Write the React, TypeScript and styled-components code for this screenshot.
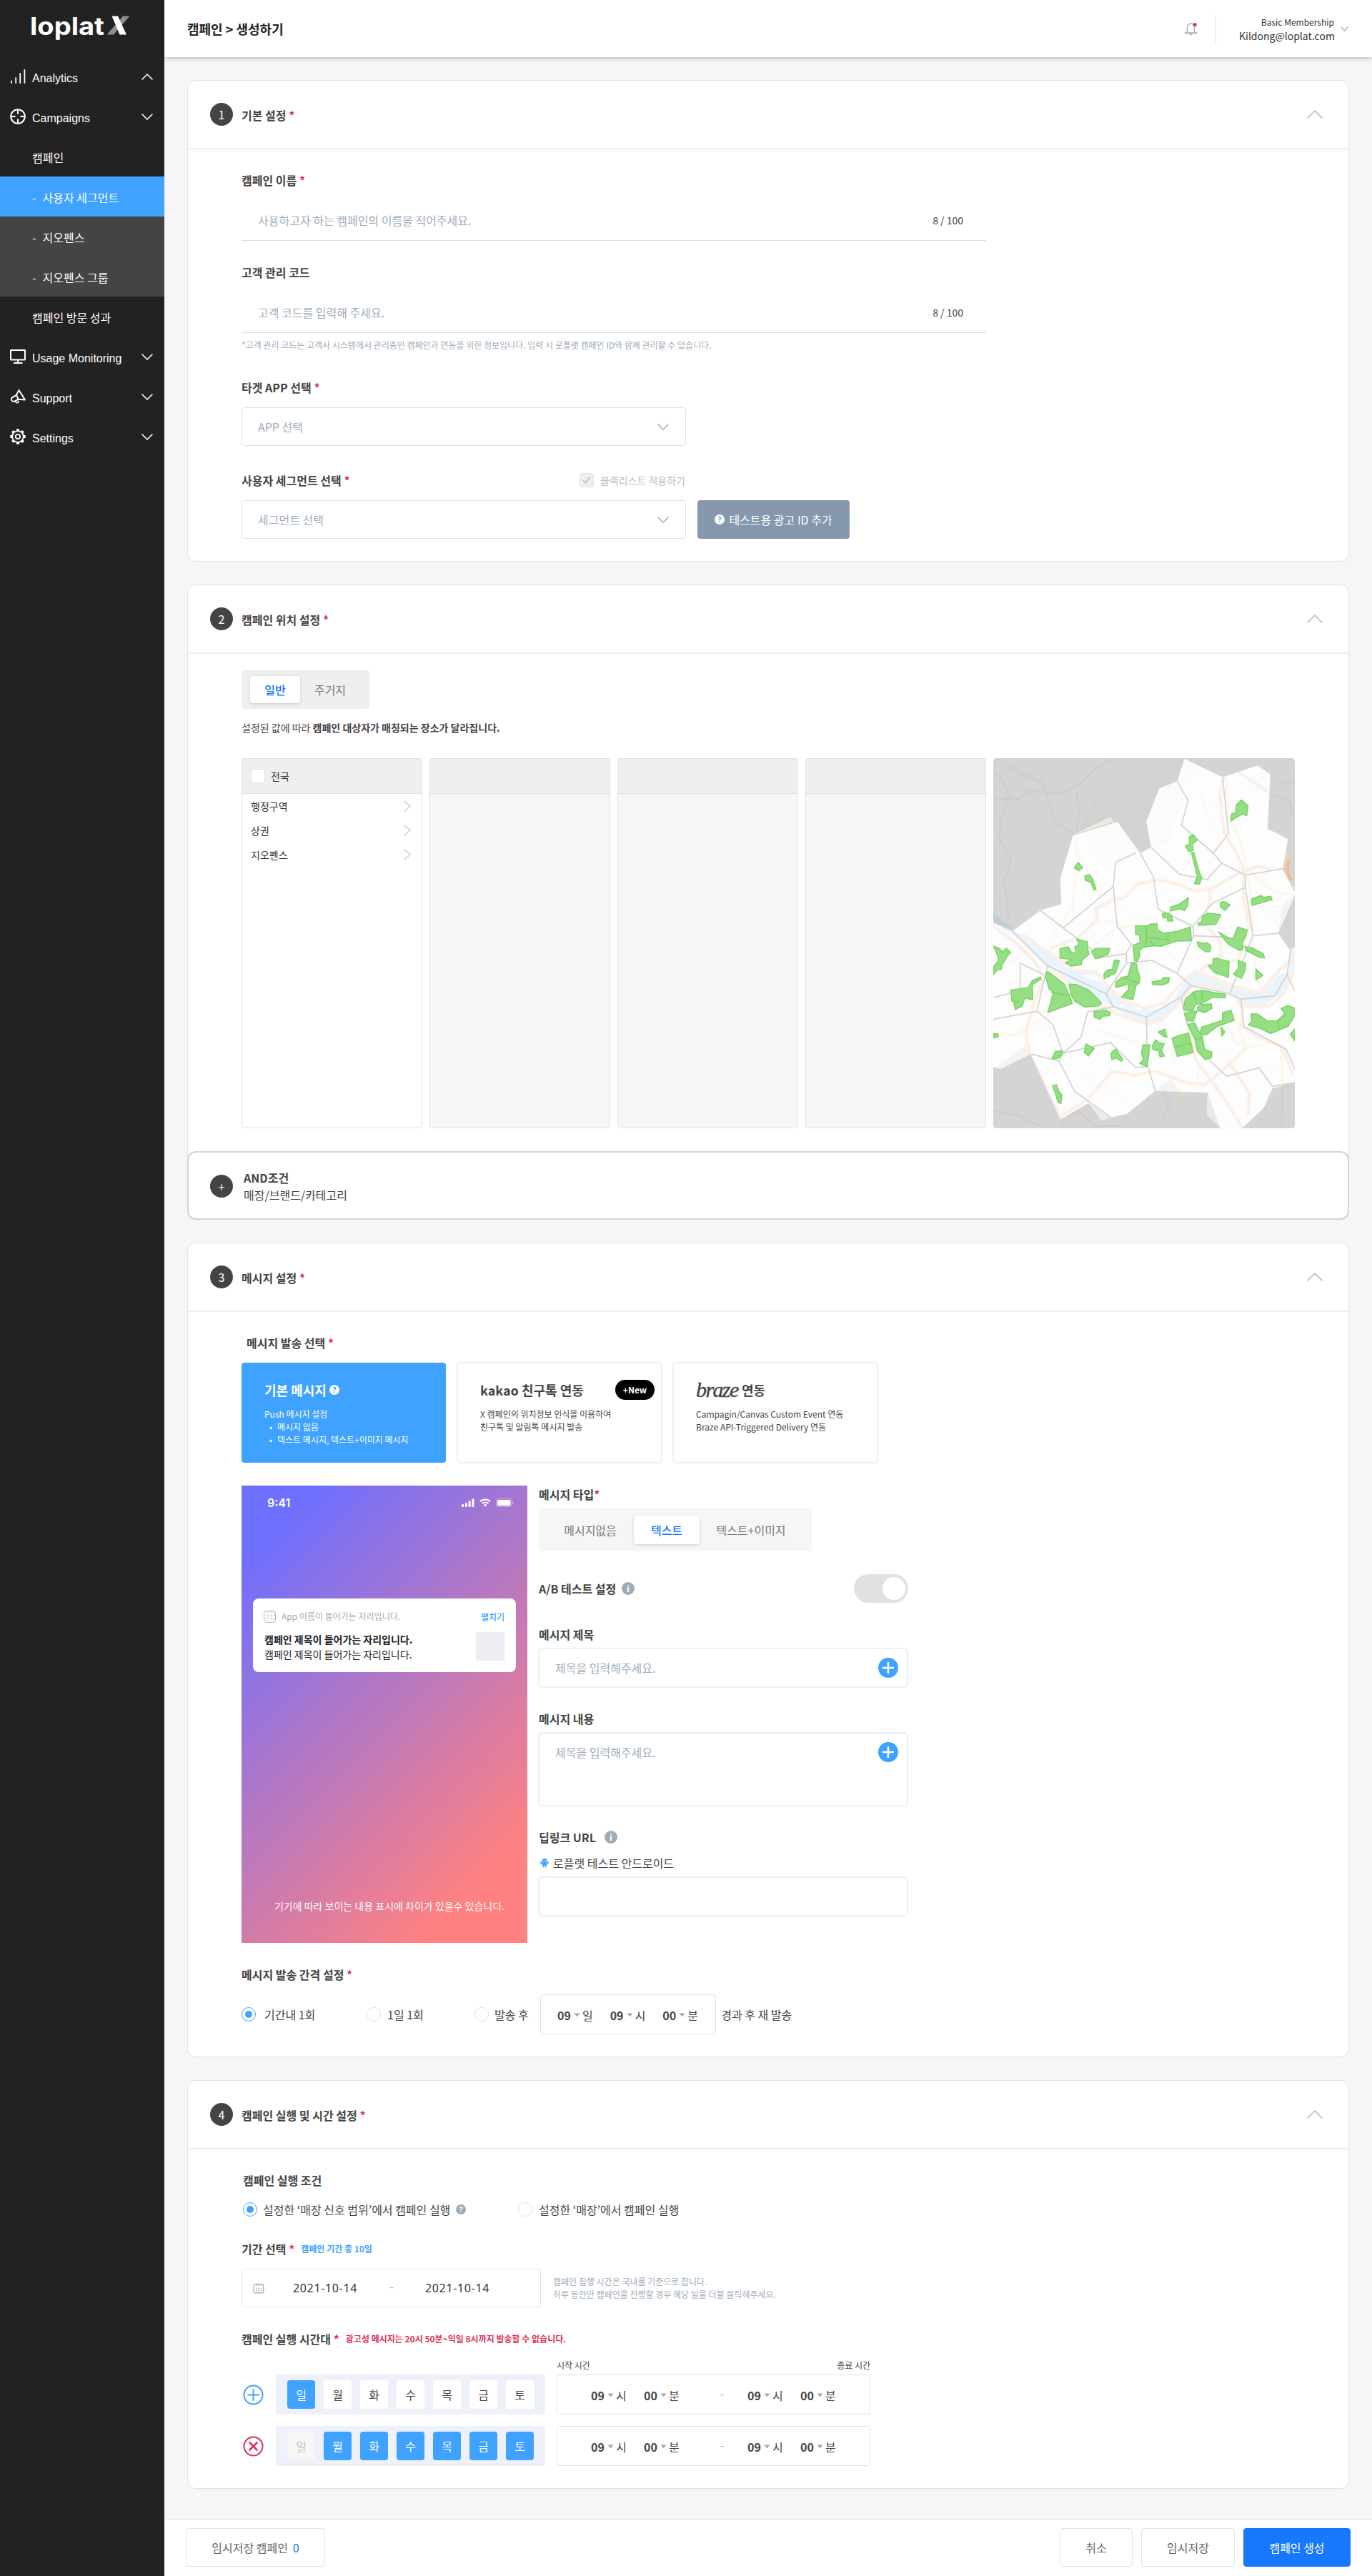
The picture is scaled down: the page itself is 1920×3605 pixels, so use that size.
import React from "react";
import styled, { createGlobalStyle, css } from "styled-components";

const SANS = '"Noto Sans CJK KR", "Noto Sans", sans-serif';
const BLUE = "#40a2ff";
const STRONG_BLUE = "#1678ff";
const RED = "#dc3359";
const INK = "#444444";
const MUTED = "#9dabb9";
const LINE = "#e1e1e1";

const GlobalStyle = createGlobalStyle`
  *, *::before, *::after { box-sizing: border-box; }
  body { margin: 0; background: #f6f6f6; font-family: ${SANS}; font-size: 16px; line-height: 24px; color: ${INK}; }
  svg { display: block; flex: none; }
  p, h1, h2, h3, ul { margin: 0; padding: 0; }
`;

/* ---------- shell ---------- */

const Page = styled.div`
  display: flex;
  width: 1920px;
  height: 3605px;
  overflow: hidden;
`;

const Sidebar = styled.aside`
  width: 230px;
  flex: none;
  background: #222222;
  color: #fff;
`;

const Logo = styled.div`
  display: flex;
  height: 79px;
  padding: 10px 0 0 41px;
`;

const NavItem = styled.a<{ $tone?: "active" | "sub" }>`
  display: flex;
  align-items: center;
  height: 56px;
  padding: 0 16px 0 14px;
  background: ${(p) => (p.$tone === "active" ? BLUE : p.$tone === "sub" ? "#444444" : "transparent")};
`;

const NavLabel = styled.span`
  flex: 1;
  padding: 5px 0 0 9px;
  font: 16px/20px "Liberation Sans", Arial, sans-serif;
`;

const NavSub = styled.span<{ $dash?: boolean }>`
  padding: 1px 0 0 31px;
  font-size: 16px;
  ${(p) =>
    p.$dash &&
    css`
      &::before {
        content: "-";
        margin-right: 9px;
      }
    `}
`;

const Main = styled.main`
  display: flex;
  flex-direction: column;
  flex: 1;
  min-width: 0;
`;

const TopBar = styled.header`
  display: flex;
  align-items: center;
  height: 80px;
  flex: none;
  padding: 0 33px 0 32px;
  background: #fff;
  box-shadow: 0 2px 6px rgba(0, 0, 0, 0.24);
`;

const PageTitle = styled.h1`
  flex: 1;
  font-size: 18px;
  line-height: 26px;
  font-weight: 700;
  color: #222;
`;

const Divider = styled.span`
  width: 1px;
  height: 40px;
  margin: 0 32px 0 25px;
  background: ${LINE};
`;

const Account = styled.div`
  width: 133px;
  margin-right: 9px;
  padding-top: 2px;
  text-align: right;
  color: #333;
  white-space: nowrap;
`;

const Plan = styled.div`
  font-size: 12px;
  line-height: 18px;
`;

const Email = styled.div`
  font-size: 14px;
  line-height: 20px;
`;

const Content = styled.div`
  display: flex;
  flex-direction: column;
  gap: 32px;
  flex: 1;
  padding: 32px 32px 0;
`;

/* ---------- cards ---------- */

const Card = styled.section<{ $h: number; $open?: boolean }>`
  height: ${(p) => p.$h}px;
  background: #fff;
  border: 1px solid ${LINE};
  border-radius: 12px;
  ${(p) => p.$open && "border-bottom: 0;"}
`;

const CardHead = styled.div`
  display: flex;
  align-items: center;
  height: 96px;
  padding: 0 36px 0 31px;
  border-bottom: 2px solid #efefef;
`;

const StepDot = styled.span`
  display: flex;
  align-items: center;
  justify-content: center;
  width: 32px;
  height: 32px;
  flex: none;
  margin-right: 12px;
  border-radius: 50%;
  background: ${INK};
  color: #fff;
`;

const CardTitle = styled.h2`
  flex: 1;
  padding-top: 1px;
  font-size: 16px;
  font-weight: 700;
  line-height: 24px;
`;

const Body = styled.div<{ $top?: number }>`
  display: flex;
  flex-direction: column;
  align-items: flex-start;
  padding: ${(p) => p.$top ?? 31}px 75px 0;
`;

const Row = styled.div<{ $mt?: number; $gap?: number }>`
  display: flex;
  align-items: center;
  gap: ${(p) => p.$gap ?? 0}px;
  margin-top: ${(p) => p.$mt ?? 0}px;
`;

const Label = styled.h3<{ $mt?: number; $indent?: number; $w?: number }>`
  display: flex;
  align-items: center;
  height: 24px;
  margin-top: ${(p) => p.$mt ?? 0}px;
  margin-left: ${(p) => p.$indent ?? 0}px;
  font-size: 16px;
  font-weight: ${(p) => p.$w ?? 700};
  white-space: pre;
`;

const Star = styled.span`
  color: ${RED};
`;

const Small = styled.span<{ $c?: string; $w?: number; $ml?: number }>`
  margin-left: ${(p) => p.$ml ?? 0}px;
  font-size: 12px;
  line-height: 18px;
  font-weight: ${(p) => p.$w ?? 400};
  color: ${(p) => p.$c ?? INK};
  white-space: nowrap;
`;

const Hint = styled.p<{ $mt?: number; $ml?: number }>`
  margin: ${(p) => p.$mt ?? 0}px 0 0 ${(p) => p.$ml ?? 0}px;
  font-size: 12px;
  line-height: 18px;
  color: ${MUTED};
`;

const LineInput = styled.div`
  display: flex;
  align-items: center;
  justify-content: space-between;
  width: 1042px;
  height: 54px;
  margin-top: 19px;
  padding: 0 32px 3px 23px;
  border-bottom: 1px solid #dcdcdc;
  color: ${MUTED};
`;

const Counter = styled.span`
  font-size: 14px;
  color: ${INK};
`;

const Select = styled.div`
  display: flex;
  align-items: center;
  justify-content: space-between;
  width: 622px;
  height: 54px;
  padding: 0 23px 0 22px;
  border: 1px solid ${LINE};
  border-radius: 4px;
  color: ${MUTED};
`;

const LabelLine = styled.div`
  display: flex;
  justify-content: space-between;
  width: 622px;
  margin: 36px 0 16px;
`;

const CheckGroup = styled.div`
  display: flex;
  align-items: center;
  gap: 9px;
  padding-right: 1px;
  font-size: 14px;
  color: #bcbcbc;
`;

const Checkbox = styled.span<{ $off?: boolean }>`
  display: flex;
  align-items: center;
  justify-content: center;
  width: 20px;
  height: 20px;
  border: 1px solid ${LINE};
  border-radius: 4px;
  background: ${(p) => (p.$off ? "#efefef" : "#fff")};
`;

const AddButton = styled.button`
  display: flex;
  align-items: center;
  justify-content: center;
  gap: 6px;
  width: 213px;
  height: 54px;
  margin-left: 16px;
  padding: 0;
  border: 0;
  border-radius: 4px;
  background: #8598ae;
  color: #fff;
  font: 16px/24px ${SANS};
`;

/* ---------- segmented control ---------- */

const Segments = styled.div<{ $w: number; $h: number; $bg: string; $mt?: number }>`
  display: flex;
  align-items: center;
  width: ${(p) => p.$w}px;
  height: ${(p) => p.$h}px;
  margin-top: ${(p) => p.$mt ?? 0}px;
  border-radius: 4px;
  background: ${(p) => p.$bg};
`;

const Segment = styled.span<{ $w: number; $h: number; $ml?: number; $on?: boolean }>`
  display: flex;
  align-items: center;
  justify-content: center;
  width: ${(p) => p.$w}px;
  height: ${(p) => p.$h}px;
  margin-left: ${(p) => p.$ml ?? 0}px;
  padding-bottom: 1px;
  border-radius: 4px;
  color: #777;
  ${(p) =>
    p.$on &&
    css`
      background: #fff;
      color: ${STRONG_BLUE};
      font-weight: 500;
      box-shadow: 0 1px 4px rgba(0, 0, 0, 0.16);
    `}
`;

/* ---------- location ---------- */

const Desc = styled.p`
  margin-top: 16px;
  font-size: 14px;
  line-height: 20px;
`;

const Regions = styled.div`
  display: flex;
  gap: 10px;
  margin-top: 33px;
`;

const RegionColumn = styled.div<{ $empty?: boolean }>`
  width: 253px;
  height: 518px;
  overflow: hidden;
  border: 1px solid ${LINE};
  border-radius: 4px;
  background: ${(p) => (p.$empty ? "#f6f6f6" : "#fff")};
  font-size: 14px;
  color: #333;
`;

const RegionHead = styled.div`
  display: flex;
  align-items: center;
  gap: 8px;
  height: 49px;
  padding-left: 12px;
  border-bottom: 1px solid ${LINE};
  background: #efefef;
`;

const RegionRow = styled.div`
  display: flex;
  align-items: center;
  justify-content: space-between;
  height: 34px;
  padding: 0 15px 0 12px;
`;

const AndCard = styled.div`
  display: flex;
  align-items: center;
  height: 96px;
  margin: 32px -1px 0;
  padding: 2px 30px 0 30px;
  border: 2px solid #d4d4d4;
  border-radius: 12px;
  background: #fff;
`;

const AndText = styled.div`
  padding-left: 3px;
  line-height: 24px;
`;

/* ---------- message ---------- */

const Cards = styled.div`
  display: flex;
  gap: 16px;
  margin-top: 16px;
`;

const MessageCard = styled.div<{ $on?: boolean }>`
  width: 286px;
  height: 140px;
  padding: 24px 9px 0 ${(p) => (p.$on ? 32 : 31)}px;
  border-radius: 4px;
  background: #fff;
  border: 1px solid #efefef;
  box-shadow: 0 0 0 1px #efefef;
  font-size: 12px;
  line-height: 18px;
  ${(p) =>
    p.$on &&
    css`
      padding-top: 25px;
      border: 0;
      box-shadow: none;
      background: ${BLUE};
      color: #fff;
    `}
`;

const MessageTitle = styled.div`
  display: flex;
  align-items: center;
  height: 26px;
  margin-bottom: 12px;
  font-size: 18px;
  font-weight: 700;
  white-space: nowrap;
`;

const Bullets = styled.ul`
  list-style: none;
  li {
    display: flex;
  }
  li::before {
    content: "•";
    width: 11px;
    margin-left: 7px;
  }
`;

const NewBadge = styled.span`
  width: 55px;
  height: 28px;
  margin-left: auto;
  border-radius: 14px;
  background: #000;
  color: #fff;
  font-size: 12px;
  line-height: 27px;
  text-align: center;
`;

const BrazeMark = styled.span`
  width: 64px;
  font: italic 400 30px/26px "Liberation Serif", serif;
  letter-spacing: -1.6px;
  -webkit-text-stroke: 0.4px ${INK};
  color: ${INK};
`;

const Composer = styled.div`
  display: flex;
  gap: 16px;
  margin-top: 32px;
`;

const Phone = styled.div`
  display: flex;
  flex-direction: column;
  width: 400px;
  height: 640px;
  padding: 12px 16px 40px;
  background: linear-gradient(135deg, #6f6fff 10%, #ff8181 86%);
  color: #fff;
`;

const StatusBar = styled.div`
  display: flex;
  align-items: center;
  gap: 7px;
  height: 24px;
  padding: 0 3px 0 20px;
  font: 600 16px/24px Inter, sans-serif;
`;

const Clock = styled.span`
  flex: 1;
`;

const Notice = styled.div`
  height: 103px;
  margin-top: 122px;
  padding: 15px 16px 0;
  border-radius: 8px;
  background: #fff;
  color: #222;
  font-size: 14px;
  line-height: 21px;
`;

const NoticeHead = styled.div`
  display: flex;
  align-items: center;
  height: 20px;
`;

const AppIcon = styled.span`
  width: 17px;
  height: 17px;
  margin: 0 8px 0 -1px;
  border: 1px solid #bbb;
  border-radius: 4px;
  background: repeating-linear-gradient(90deg, transparent 0 4px, #e4e4e4 4px 5px),
    repeating-linear-gradient(0deg, transparent 0 4px, #e4e4e4 4px 5px);
`;

const NoticeAction = styled.span`
  margin-left: auto;
  font-size: 12px;
  font-weight: 500;
  color: ${BLUE};
`;

const NoticeBody = styled.div`
  display: flex;
  justify-content: space-between;
  margin-top: 12px;
`;

const Thumb = styled.span`
  width: 40px;
  height: 40px;
  background: #eeeff4;
`;

const PhoneNote = styled.p`
  margin-top: auto;
  padding-right: 16px;
  font-size: 14px;
  line-height: 24px;
  text-align: right;
`;

const Form = styled.div`
  width: 516px;
`;

const ToggleRow = styled.div`
  display: flex;
  align-items: center;
  justify-content: space-between;
  height: 40px;
  margin: 32px -1px 0 0;
`;

const Toggle = styled.span`
  display: flex;
  justify-content: flex-end;
  width: 76px;
  height: 40px;
  padding: 4px;
  border-radius: 20px;
  background: #e1e1e1;
  &::before {
    content: "";
    width: 32px;
    height: 32px;
    border-radius: 50%;
    background: #fff;
  }
`;

const Field = styled.div<{ $h?: number }>`
  display: flex;
  align-items: flex-start;
  justify-content: space-between;
  height: ${(p) => p.$h ?? 54}px;
  margin-top: 8px;
  padding: 12px 12px 0 22px;
  border: 1px solid #efefef;
  border-radius: 4px;
  box-shadow: 0 0 0 1px #efefef;
  color: ${MUTED};
  line-height: 28px;
`;

const IntervalRow = styled.div`
  display: flex;
  align-items: center;
  height: 56px;
  margin-top: 16px;
`;

const RadioLabel = styled.span<{ $w: number; $gap?: number }>`
  display: flex;
  align-items: center;
  gap: ${(p) => p.$gap ?? 9}px;
  width: ${(p) => p.$w}px;
  white-space: nowrap;
`;

const RadioDot = styled.span<{ $on?: boolean }>`
  width: 20px;
  height: 20px;
  flex: none;
  padding: 4px;
  border: 1px solid ${(p) => (p.$on ? BLUE : LINE)};
  border-radius: 50%;
  background: ${(p) => (p.$on ? BLUE : "#fff")};
  background-clip: content-box;
`;

const TimeBox = styled.div<{ $w: number; $pl: number; $ml?: number }>`
  display: flex;
  align-items: center;
  width: ${(p) => p.$w}px;
  height: 56px;
  margin-left: ${(p) => p.$ml ?? 0}px;
  padding-left: ${(p) => p.$pl}px;
  padding-top: 1px;
  border: 1px solid ${LINE};
  border-radius: 4px;
`;

const TimePart = styled.span`
  display: flex;
  align-items: center;
  width: 74px;
  b {
    width: 23px;
    font-weight: 700;
  }
  svg {
    margin-right: 3px;
  }
`;

const Dash = styled.span<{ $w: number }>`
  width: ${(p) => p.$w}px;
  margin-top: -6px;
  text-align: center;
  color: ${MUTED};
`;

/* ---------- schedule ---------- */

const DateBox = styled.div`
  display: flex;
  align-items: center;
  width: 419px;
  height: 54px;
  padding-left: 15px;
  border: 1px solid ${LINE};
  border-radius: 4px;
  color: #333;
`;

const DateText = styled.span`
  width: 91px;
  font: 16px/24px "Noto Sans", sans-serif;
  letter-spacing: 0.65px;
  white-space: nowrap;
`;

const TimeHead = styled.div`
  display: flex;
  justify-content: space-between;
  width: 439px;
  margin: 16px 0 0 441px;
  height: 18px;
`;

const Week = styled.div`
  display: flex;
  gap: 12px;
  width: 377px;
  height: 56px;
  margin: 0 16px 0 17px;
  padding: 8px 16px;
  border-radius: 4px;
  background: #eef1f9;
`;

const Day = styled.span<{ $state: "on" | "off" | "disabled" }>`
  width: 39px;
  height: 40px;
  border-radius: 4px;
  line-height: 40px;
  text-align: center;
  background: ${(p) => (p.$state === "on" ? BLUE : p.$state === "off" ? "#fff" : "#f6f6f6")};
  color: ${(p) => (p.$state === "on" ? "#fff" : p.$state === "off" ? INK : "#c4c4c4")};
`;

/* ---------- footer ---------- */

const Footer = styled.footer`
  display: flex;
  gap: 12px;
  height: 80px;
  flex: none;
  padding: 12px 30px 0;
  border-top: 1px solid ${LINE};
  background: #fff;
`;

const FootButton = styled.button<{ $w: number; $primary?: boolean; $left?: boolean }>`
  width: ${(p) => p.$w}px;
  height: 54px;
  padding: 0;
  border: 1px solid ${(p) => (p.$primary ? STRONG_BLUE : LINE)};
  border-radius: 4px;
  background: ${(p) => (p.$primary ? STRONG_BLUE : "#fff")};
  color: ${(p) => (p.$primary ? "#fff" : "#666")};
  font: 16px/24px ${SANS};
  ${(p) => p.$left && "margin-right: auto;"}
`;

const DraftCount = styled.span`
  margin-left: 7px;
  color: ${STRONG_BLUE};
`;

/* ---------- icons ---------- */

type ChevronProps = { dir: "up" | "down" | "right"; w: number; h: number; color: string; stroke?: number };

const Chevron = ({ dir, w, h, color, stroke = 1.5 }: ChevronProps) => {
  const d =
    dir === "up"
      ? `M1 ${h - 1}L${w / 2} 1L${w - 1} ${h - 1}`
      : dir === "down"
        ? `M1 1L${w / 2} ${h - 1}L${w - 1} 1`
        : `M1 1L${w - 1} ${h / 2}L1 ${h - 1}`;
  return (
    <svg width={w} height={h} fill="none" stroke={color} strokeWidth={stroke} strokeLinecap="round" strokeLinejoin="round">
      <path d={d} />
    </svg>
  );
};

const BarsIcon = () => (
  <svg width="22" height="22" stroke="#fff" strokeWidth="1.8" strokeLinecap="round">
    <path d="M2 20v-2.5M8.2 20v-7M14.2 20V7M20.4 20V2" />
  </svg>
);

const TargetIcon = () => (
  <svg width="22" height="22" fill="none" stroke="#fff" strokeWidth="2">
    <circle cx="11" cy="11" r="9.8" />
    <path d="M11 1.5v6M11 14.5v6M1.5 11h6M14.5 11h6" />
  </svg>
);

const MonitorIcon = () => (
  <svg width="22" height="22" fill="none" stroke="#fff" strokeWidth="2">
    <rect x="1" y="2" width="20" height="13.5" rx="0.5" />
    <path d="M11 15.500v4M5 20h12.500" />
  </svg>
);

const MegaphoneIcon = () => (
  <svg width="22" height="22" fill="none" stroke="#fff" strokeWidth="2" strokeLinejoin="round" strokeLinecap="round">
    <path d="M12.500 2L21 15.500l-9.500-.8L9 8.500z" />
    <path d="M9 9l-6 3.300a3.200 3.200 0 0 0 2.800 5.500l5.700-3" />
    <path d="M7.500 17.500c.8 2.800 4.500 3 4.300-.2" strokeWidth="1.700" />
  </svg>
);

const GearIcon = () => (
  <svg width="22" height="22" viewBox="0 0 22 22" fill="none" stroke="#fff">
    <circle cx="11" cy="11" r="7.800" strokeWidth="1.800" />
    <circle cx="11" cy="11" r="3.200" strokeWidth="1.800" />
    {[0, 45, 90, 135, 180, 225, 270, 315].map((a) => (
      <path key={a} d="M9 1.800h4" strokeWidth="3" transform={`rotate(${a} 11 11)`} />
    ))}
  </svg>
);

const LogoArt = () => (
  <svg width="142" height="56" viewBox="0 -10 142 56">
    <text x="1" y="28.500" textLength="104" lengthAdjust="spacingAndGlyphs" fill="#fff" fontFamily="Inter, sans-serif" fontWeight="700" fontSize="34">
      loplat
    </text>
    <path d="M131 2.500h9.500L118 28.500h-9.500z" fill="#8d8d8d" />
    <path d="M115.500 2.500h8.500L136 28.500h-9.500z" fill="#fff" />
  </svg>
);

const BellIcon = () => (
  <svg width="19" height="21" fill="none">
    <path d="M4.500 15.500V8.500a5 5.500 0 0 1 10 0v7" stroke="#9dabb9" strokeWidth="1.500" />
    <path d="M1.500 16.200h16" stroke="#9dabb9" strokeWidth="1.800" strokeLinecap="round" />
    <path d="M7.500 17.500h4a2 2 0 0 1-4 0z" fill="#9dabb9" />
    <circle cx="15.200" cy="4.500" r="2.500" fill={RED} />
  </svg>
);

const GlyphDot = ({ size, bg, fg, glyph }: { size: number; bg: string; fg: string; glyph: string }) => (
  <svg width={size} height={size} viewBox="0 0 18 18">
    <circle cx="9" cy="9" r="9" fill={bg} />
    <text x="9" y="13.500" fill={fg} fontFamily="Noto Sans, sans-serif" fontWeight="700" fontSize="13" textAnchor="middle">
      {glyph}
    </text>
  </svg>
);

const CheckIcon = () => (
  <svg width="12" height="10" fill="none" stroke="#b4b4b4" strokeWidth="1.400">
    <path d="M1 5l3.500 3.500L11 1" />
  </svg>
);

const PlusDot = () => (
  <svg width="28" height="28">
    <circle cx="14" cy="14" r="14" fill={BLUE} />
    <path d="M14 7v14M7 14h14" stroke="#fff" strokeWidth="2.600" strokeLinecap="round" />
  </svg>
);

const RingIcon = ({ kind }: { kind: "add" | "remove" }) => (
  <svg width="29" height="29" fill="none" stroke={kind === "add" ? BLUE : RED} strokeWidth="2" strokeLinecap="round">
    <circle cx="14.500" cy="14.500" r="13" />
    {kind === "add" ? <path d="M14.500 7v15M7 14.500h15" /> : <path d="M9.500 9.500l10 10M19.500 9.500l-10 10" strokeWidth="2.600" />}
  </svg>
);

const Caret = () => (
  <svg width="9" height="6">
    <path d="M0.500 0.500h8L4.500 5.500z" fill="#9dabb9" />
  </svg>
);

const SignalIcon = () => (
  <svg width="18" height="12" fill="#fff">
    <rect x="0" y="8" width="3" height="4" rx="0.800" />
    <rect x="4.800" y="6" width="3" height="6" rx="0.800" />
    <rect x="9.600" y="3.300" width="3" height="8.700" rx="0.800" />
    <rect x="14.400" y="0.500" width="3" height="11.500" rx="0.800" />
  </svg>
);

const WifiIcon = () => (
  <svg width="16" height="12" fill="none" stroke="#fff" strokeWidth="2.100">
    <path d="M0.800 4.300a10.500 10.500 0 0 1 14.400 0" />
    <path d="M3.500 7.200a6.600 6.600 0 0 1 9 0" />
    <path d="M8 11.600L5.600 9.200a3.400 3.400 0 0 1 4.800 0z" fill="#fff" stroke="none" />
  </svg>
);

const BatteryIcon = () => (
  <svg width="25" height="12">
    <rect x="0.500" y="0.500" width="21.500" height="11" rx="3" fill="none" stroke="#fff" strokeOpacity="0.400" />
    <rect x="2" y="2" width="18.500" height="8" rx="1.600" fill="#fff" />
    <path d="M23.200 4v4c1-.4 1.300-1.200 1.300-2s-.3-1.600-1.300-2z" fill="#fff" fillOpacity="0.450" />
  </svg>
);

const AndroidIcon = () => (
  <svg width="15" height="14" fill={BLUE}>
    <path d="M4.500 4.300a3.500 3.400 0 0 1 7 0z" />
    <rect x="4.500" y="4.800" width="7" height="5.700" rx="0.700" />
    <rect x="2.300" y="4.800" width="1.600" height="4.200" rx="0.800" />
    <rect x="12.100" y="4.800" width="1.600" height="4.200" rx="0.800" />
    <rect x="5.700" y="9.500" width="1.600" height="4" rx="0.800" />
    <rect x="8.700" y="9.500" width="1.600" height="4" rx="0.800" />
    <path d="M5.500 0.300l1 1.400M10.500 0.300l-1 1.400" stroke={BLUE} strokeWidth="0.600" />
  </svg>
);

const CalendarIcon = () => (
  <svg width="16" height="15" fill="none" stroke="#9dabb9" strokeWidth="1.200">
    <rect x="1.200" y="2.200" width="13.600" height="11.600" rx="1.500" />
    <path d="M4.500 0.500v3.500M11.500 0.500v3.500M8 0.500v3.500" />
    <path d="M4 7.500h1.500M7.300 7.500h1.500M10.600 7.500h1.500M4 10.700h1.500M7.300 10.700h1.500M10.600 10.700h1.500" strokeWidth="1.400" />
  </svg>
);

/* ---------- map ---------- */

const outerRoads = [
  "90,110 130,145 155,210 120,310 115,370 165,460 135,540 150,640 155,690",
  "90,215 190,220 240,190 375,195 450,165 520,100 590,60",
  "150,90 230,130 300,160 350,310 430,355",
  "440,190 450,260 440,350",
  "90,1440 180,1455 300,1505",
  "370,1500 440,1440 520,1500 640,1500",
  "800,1370 830,1410 800,1480",
  "1305,155 1356,155",
  "1240,190 1330,225 1356,290",
  "1305,1340 1300,1508",
];

const innerRoads = [
  "1045,62 1055,134 1040,200 1060,350 1110,430 1140,490 1140,600 1165,720 1120,850 1060,860",
  "1115,110 1240,190",
  "90,715 180,780 270,860 300,930 260,1020 228,1130 232,1200 300,1330 375,1470",
  "170,740 320,815 430,890 520,895 570,950 640,1010 730,1040 810,1015 890,930 940,895 1080,945 1210,980 1280,900 1356,840",
  "320,870 400,930 520,1015 620,1065 730,1100 800,1085 880,1010 930,945 1060,965 1150,1030 1250,1030 1310,980 1356,890",
  "330,805 440,765 530,690 520,650 590,615 640,605 700,550 780,535 870,555 930,578 1000,575 1110,515 1200,482 1260,495",
  "1000,575 1000,620 965,700 1040,770 1050,830 960,890",
  "375,1460 480,1400 590,1285 680,1302 770,1285 900,1330 980,1338 1080,1260 1150,1195",
  "885,1010 940,1240 1050,1380 1135,1505",
  "1100,985 1135,1040 1130,1110 1200,1150 1300,1190 1350,1300",
  "1075,1245 1165,1370 1160,1460",
];

const yellowRoads = [
  "435,365 450,470 430,560 425,640 370,710 325,770",
  "1065,134 1075,270 1130,390 1160,520 1175,640 1180,780 1200,930 1240,1000",
  "90,1130 180,1145 260,1100 330,1060",
  "1160,500 1275,590 1356,590",
  "500,800 560,760 600,725 690,715",
  "1100,1060 1150,1195 1280,1170",
  "1300,1200 1305,1340",
];

const districts = [
  "170,737 318,872 563,982 595,1033 733,1073 880,994 918,950 1083,982 1130,1003 1272,990 1323,908 1338,810",
  "862,149 908,225 880,322 1015,432 1048,470 1148,517 1306,492 1356,580",
  "1053,134 1077,355 1013,432",
  "752,408 870,513 988,535 1048,470",
  "690,430 603,467 594,562 610,718 670,788 648,825 650,862 563,982",
  "707,432 762,522 782,650 928,717 931,755 862,902 918,950",
  "594,562 383,724",
  "288,655 383,724 500,806 530,843 648,825",
  "1148,517 1148,565 1180,755 1083,982",
  "1148,565 1010,628 928,717",
  "931,755 1075,760 1148,800",
  "1180,755 1286,745",
  "650,862 755,851 862,902",
  "318,872 273,1050 90,1082",
  "273,1050 340,1102 383,1215",
  "303,907 203,862 203,970 90,997",
  "247,1218 365,1245 383,1215 582,1173 688,1272 740,1265",
  "365,1245 432,1365 585,1466",
  "383,1215 458,1153 486,1053 595,1033",
  "733,1073 737,1260 770,1362",
  "880,994 900,1090 1000,1245 1070,1306 1206,1272 1262,1345 1356,1330",
  "1130,1003 1142,1110 1320,1200 1356,1278",
  "1323,908 1356,970",
];

const zones = [
  "1132,223 1160,245 1154,285 1138,277 1108,292 1088,306 1090,278 1107,274 1110,242",
  "930,358 946,380 926,396 930,420 912,426 896,404 914,394 912,368",
  "922,430 932,428 957,512 966,526 956,552 934,552 946,522 936,482",
  "446,468 466,488 450,500 430,489",
  "474,520 495,515 508,535 522,575 512,575 500,545 476,538",
  "910,605 906,636 893,657 872,650 832,658 836,642 868,632",
  "800,667 826,665 838,676 844,697 822,697 820,685 802,685",
  "1175,610 1215,597 1225,605 1255,600 1261,614 1176,636",
  "1042,624 1058,620 1084,634 1062,656 1044,642",
  "950,704 964,702 968,680 990,666 1046,672 1024,710 950,714",
  "687,715 733,717 750,708 778,708 778,730 805,745 858,738 918,720 922,774 858,776 796,796 764,794 720,800 704,812 705,834 694,855 683,852 676,792 706,782 704,752 687,750",
  "1036,740 1080,765 1098,762 1116,720 1156,732 1150,756 1136,780 1138,808 1124,813 1080,790 1062,772",
  "1148,797 1180,803 1224,826 1229,842 1210,840 1150,812",
  "946,778 975,785 988,781 1004,795 1000,818 980,817 950,796",
  "1013,845 1030,843 1080,855 1078,918 1020,900 992,872 1012,868",
  "1118,852 1150,862 1148,888 1132,922 1098,905 1118,884",
  "1193,885 1222,910 1192,928",
  "440,768 486,778 486,800 492,828 462,850 460,868 418,874 392,860 420,848 370,842 370,805 405,798 420,822 438,822 432,798 450,788",
  "503,818 518,804 580,804 572,828 520,845",
  "598,850 620,852 604,900 556,923 554,905 570,888 590,886",
  "670,860 690,862 696,890 705,916 704,938 690,950 676,1005 628,995 656,966 660,944 604,958 604,936 630,918 656,912",
  "756,935 794,930 806,918 830,920 826,938 800,948 758,946",
  "90,795 115,805 130,818 145,803 163,820 148,836 126,872 124,886 106,890 90,908 90,878 112,850 104,822",
  "164,967 236,958 254,930 290,916 290,926 254,946 256,1005 222,1000 212,1030 182,1044 176,1020 198,1014 168,1012",
  "318,894 388,944 410,990 422,1020 318,1056 330,1020 342,975 324,962 308,910",
  "408,944 440,946 492,968 545,1018 530,1030 474,1034 430,1010 416,985",
  "512,1052 560,1046 583,1056 576,1068 550,1070 538,1083 514,1074",
  "90,1138 111,1140 111,1150 90,1155",
  "888,1040 896,1004 930,975 966,968 1020,978 1066,984 1064,998 1012,996 970,1018 936,1026 930,1045 906,1050",
  "946,1036 962,1024 1006,1022 1008,1040 978,1056 950,1048",
  "892,1060 920,1052 946,1050 930,1090 904,1088",
  "906,1102 936,1096 956,1134 966,1112 1012,1098 1052,1086 1052,1056 1088,1046 1102,1086 1030,1110 986,1142 966,1142 978,1200 1008,1210 1006,1232 980,1240 946,1206 936,1160",
  "1046,1112 1062,1132 1050,1148",
  "840,1156 872,1144 910,1136 930,1212 862,1228",
  "1172,1060 1200,1062 1240,1088 1282,1088 1314,1060 1298,1040 1328,1028 1356,1038 1356,1066 1330,1108 1254,1138 1210,1118 1160,1104 1174,1092",
  "1356,1120 1336,1140 1356,1168",
  "782,1132 810,1120 820,1152 804,1148",
  "758,1186 772,1162 786,1174 808,1178 796,1204 808,1226 790,1230 784,1206 760,1200",
  "718,1182 748,1182 744,1214 736,1268 704,1254 720,1242 712,1214",
  "478,1178 514,1196 490,1226 472,1212",
  "584,1214 604,1198 618,1218 634,1238 628,1246 606,1234 588,1240",
  "336,1236 350,1208 382,1206 372,1228 358,1236",
  "338,1342 356,1338 364,1362 378,1378 374,1412 362,1408 350,1372",
];

const CITY =
  "893,62 1053,134 1199,88 1253,122 1242,336 1327,376 1306,492 1356,570 1356,595 1286,745 1335,810 1356,800 1356,1330 1262,1352 1225,1430 1135,1508 1042,1508 990,1370 770,1362 652,1452 585,1466 490,1410 372,1474 247,1218 120,1276 90,1268 90,703 170,737 288,655 376,631 371,530 425,362 612,309 707,432 752,408 733,307 787,178 862,149";

const RegionMap = () => (
  <svg width="422" height="518" viewBox="90 59 1266 1450" preserveAspectRatio="none" fill="none" strokeLinejoin="round">
    <defs>
      <clipPath id="frame">
        <rect x="90" y="59" width="1266" height="1450" rx="12" />
      </clipPath>
      <clipPath id="city">
        <polygon points={CITY} />
      </clipPath>
    </defs>
    <g clipPath="url(#frame)">
      <rect x="90" y="59" width="1266" height="1450" fill="#d4d4d4" />
      <path d="M590 59H893L862 149L787 178L733 307L752 408L707 432L612 309L450 340Z" fill="#d2d2d0" />
      {outerRoads.map((p) => (
        <polyline key={p} points={p} stroke="#d1ccc8" strokeWidth="7" />
      ))}
      <path d="M150 90L180 130L290 120L310 210L365 190M330 310L250 370L235 490L150 570L90 600" stroke="#cbd1d5" strokeWidth="3" />
      <polygon points="90,665 180,735 170,737 90,705" fill="#c2ccd3" />
      <polygon points="430,357 582,289 596,308" fill="#e9ece6" />
      <polygon points="490,1410 545,1480 588,1466" fill="#e9ece6" />
      <polygon points="990,1370 985,1455 1042,1505" fill="#e9ece6" />
      <polygon points={CITY} fill="#fdfdfd" />
      <g clipPath="url(#city)">
        <path d="M787 178L862 149L908 225L850 290L830 390L752 408L733 307ZM470 350L612 309L700 425L600 500L540 470ZM900 70L960 100L910 170L880 150Z" fill="#fbfbf9" />
        <path d="M90 1280L247 1170V1230ZM770 1362L835 1315L880 1372ZM1286 745L1356 590L1300 640Z" fill="#f3f3f3" />
        <path
          d="M90 690L170 737L240 755L320 815L400 880L500 893L560 950L620 1000L700 1045L780 1043L850 1005L890 930L940 900L1000 915L1080 945L1180 980L1230 970L1290 905L1330 900L1340 790H1356V880L1300 980L1230 1025L1150 1025L1090 985L1000 965L930 950L870 1030L790 1085L700 1095L620 1050L545 1010L480 960L380 920L300 865L200 770L90 705Z"
          fill="#e9f4fd"
        />
        <path
          d="M420 400L560 600M600 640L780 700M460 700L620 700M780 580L900 640M900 440L1010 560M1180 560L1290 720M800 800L900 880M980 560L1120 640M300 1100L460 1180M520 1120L700 1180M780 1100L860 1260M960 1260L1080 1200M1160 1260L1300 1280M1180 640L1300 640M470 1300L640 1400M1000 250L1130 240M960 180L1000 330M120 880L200 840"
          stroke="#f6f6f6"
          strokeWidth="4"
        />
        {yellowRoads.map((p) => (
          <polyline key={p} points={p} stroke="#fef6e6" strokeWidth="8" />
        ))}
        {innerRoads.map((p) => (
          <polyline key={p} points={p} stroke="#fcf0e6" strokeWidth="13" />
        ))}
        <path d="M465 910l30-4l45 22l-20 4zM610 1030l22-8l14 12z" fill="#fff" />
        <path d="M1060 1070L1110 1180L1150 1160M950 1260V1320" stroke="#e3f1fa" strokeWidth="4" />
      </g>
      <path d="M1333 462c-14 22-8 60 12 76" stroke="#f5bd8a" strokeWidth="12" />
      <path d="M1326 430L1312 480M875 1375h28M1300 1345v8" stroke="#fbd98c" strokeWidth="6" />
      {districts.map((p) => (
        <polyline key={p} points={p} stroke="#d3d3d3" strokeWidth="5" />
      ))}
      {zones.map((p) => (
        <polygon key={p} points={p} fill="#96dd84" stroke="#73d560" strokeWidth="4" />
      ))}
      <path
        d="M733 717V800M736 762L824 770M824 742V780M750 775L764 794M330 975L410 990M630 918L705 940M930 975L942 1020M966 968V1005M936 1160L970 1156M858 1190L920 1175M1282 1088L1292 1120M956 1134L966 1142"
        stroke="#73d560"
        strokeWidth="4"
      />
    </g>
  </svg>
);

/* ---------- composed parts ---------- */

const Section = ({ step, title, height, open, children }: { step: number; title: string; height: number; open?: boolean; children: React.ReactNode }) => (
  <Card $h={height} $open={open}>
    <CardHead>
      <StepDot>{step}</StepDot>
      <CardTitle>
        {title} <Star>*</Star>
      </CardTitle>
      <Chevron dir="up" w={22} h={12} color="#bccade" stroke={2} />
    </CardHead>
    {children}
  </Card>
);

const Time = ({ value, unit }: { value: string; unit: string }) => (
  <TimePart>
    <b>{value}</b>
    <Caret />
    {unit}
  </TimePart>
);

const DAYS = ["일", "월", "화", "수", "목", "금", "토"];

const ScheduleRow = ({ kind, states, mt }: { kind: "add" | "remove"; states: Array<"on" | "off" | "disabled">; mt: number }) => (
  <Row $mt={mt}>
    <Label $indent={2}>
      <RingIcon kind={kind} />
    </Label>
    <Week>
      {DAYS.map((d, i) => (
        <Day key={d} $state={states[i]}>
          {d}
        </Day>
      ))}
    </Week>
    <TimeBox $w={439} $pl={47}>
      <Time value="09" unit="시" />
      <Time value="00" unit="분" />
      <Dash $w={71}>-</Dash>
      <Time value="09" unit="시" />
      <Time value="00" unit="분" />
    </TimeBox>
  </Row>
);

const navChevron = (dir: "up" | "down") => <Chevron dir={dir} w={16} h={9} color="#fff" stroke={1.6} />;

export default function App() {
  return (
    <Page>
      <GlobalStyle />
      <Sidebar>
        <Logo>
          <LogoArt />
        </Logo>
        <NavItem>
          <BarsIcon />
          <NavLabel>Analytics</NavLabel>
          {navChevron("up")}
        </NavItem>
        <NavItem>
          <TargetIcon />
          <NavLabel>Campaigns</NavLabel>
          {navChevron("down")}
        </NavItem>
        <NavItem>
          <NavSub>캠페인</NavSub>
        </NavItem>
        <NavItem $tone="active">
          <NavSub $dash>사용자 세그먼트</NavSub>
        </NavItem>
        <NavItem $tone="sub">
          <NavSub $dash>지오펜스</NavSub>
        </NavItem>
        <NavItem $tone="sub">
          <NavSub $dash>지오펜스 그룹</NavSub>
        </NavItem>
        <NavItem>
          <NavSub>캠페인 방문 성과</NavSub>
        </NavItem>
        <NavItem>
          <MonitorIcon />
          <NavLabel>Usage Monitoring</NavLabel>
          {navChevron("down")}
        </NavItem>
        <NavItem>
          <MegaphoneIcon />
          <NavLabel>Support</NavLabel>
          {navChevron("down")}
        </NavItem>
        <NavItem>
          <GearIcon />
          <NavLabel>Settings</NavLabel>
          {navChevron("down")}
        </NavItem>
      </Sidebar>

      <Main>
        <TopBar>
          <PageTitle>캠페인 &gt; 생성하기</PageTitle>
          <BellIcon />
          <Divider />
          <Account>
            <Plan>Basic Membership</Plan>
            <Email>Kildong@loplat.com</Email>
          </Account>
          <Chevron dir="down" w={11} h={7} color="#9dabb9" stroke={1.2} />
        </TopBar>

        <Content>
          <Section step={1} title="기본 설정" height={674}>
            <Body>
              <Label>
                캠페인 이름 <Star>*</Star>
              </Label>
              <LineInput>
                사용하고자 하는 캠페인의 이름을 적어주세요.
                <Counter>8 / 100</Counter>
              </LineInput>
              <Label $mt={32}>고객 관리 코드</Label>
              <LineInput>
                고객 코드를 입력해 주세요.
                <Counter>8 / 100</Counter>
              </LineInput>
              <Hint $mt={8}>
                *고객 관리 코드는 고객사 시스템에서 관리중인 캠페인과 연동을 위한 정보입니다. 입력 시 로플랫 캠페인 ID와 함께 관리할 수 있습니다.
              </Hint>
              <Label $mt={38}>
                타겟 APP 선택 <Star>*</Star>
              </Label>
              <Row $mt={16}>
                <Select>
                  APP 선택
                  <Chevron dir="down" w={16} h={9} color="#9dabb9" />
                </Select>
              </Row>
              <LabelLine>
                <Label>
                  사용자 세그먼트 선택 <Star>*</Star>
                </Label>
                <CheckGroup>
                  <Checkbox $off>
                    <CheckIcon />
                  </Checkbox>
                  블랙리스트 적용하기
                </CheckGroup>
              </LabelLine>
              <Row>
                <Select>
                  세그먼트 선택
                  <Chevron dir="down" w={16} h={9} color="#9dabb9" />
                </Select>
                <AddButton>
                  <GlyphDot size={14} bg="#fff" fg="#8598ae" glyph="?" />
                  테스트용 광고 ID 추가
                </AddButton>
              </Row>
            </Body>
          </Section>

          <Section step={2} title="캠페인 위치 설정" height={889} open>
            <Body $top={23}>
              <Segments $w={179} $h={54} $bg="#efefef">
                <Segment $w={70} $h={38} $ml={12} $on>
                  일반
                </Segment>
                <Segment $w={84} $h={38}>
                  주거지
                </Segment>
              </Segments>
              <Desc>
                설정된 값에 따라 <b>캠페인 대상자가 매칭되는 장소가 달라집니다.</b>
              </Desc>
              <Regions>
                <RegionColumn>
                  <RegionHead>
                    <Checkbox />
                    전국
                  </RegionHead>
                  {["행정구역", "상권", "지오펜스"].map((name) => (
                    <RegionRow key={name}>
                      {name}
                      <Chevron dir="right" w={10} h={16} color="#bccade" />
                    </RegionRow>
                  ))}
                </RegionColumn>
                {[1, 2, 3].map((n) => (
                  <RegionColumn key={n} $empty>
                    <RegionHead />
                  </RegionColumn>
                ))}
                <RegionMap />
              </Regions>
            </Body>
            <AndCard>
              <StepDot>+</StepDot>
              <AndText>
                <Label>AND조건</Label>
                매장/브랜드/카테고리
              </AndText>
            </AndCard>
          </Section>

          <Section step={3} title="메시지 설정" height={1140}>
            <Body>
              <Label $indent={7}>
                메시지 발송 선택 <Star>*</Star>
              </Label>
              <Cards>
                <MessageCard $on>
                  <MessageTitle>
                    기본 메시지&nbsp;
                    <GlyphDot size={14} bg="#fff" fg={BLUE} glyph="?" />
                  </MessageTitle>
                  Push 메시지 설정
                  <Bullets>
                    <li>메시지 없음</li>
                    <li>텍스트 메시지, 텍스트+이미지 메시지</li>
                  </Bullets>
                </MessageCard>
                <MessageCard>
                  <MessageTitle>
                    kakao 친구톡 연동
                    <NewBadge>+New</NewBadge>
                  </MessageTitle>
                  X 캠페인의 위치정보 인식을 이용하여
                  <br />
                  친구톡 및 알림톡 메시지 발송
                </MessageCard>
                <MessageCard>
                  <MessageTitle>
                    <BrazeMark>braze</BrazeMark>
                    연동
                  </MessageTitle>
                  Campagin/Canvas Custom Event 연동
                  <br />
                  Braze API-Triggered Delivery 연동
                </MessageCard>
              </Cards>

              <Composer>
                <Phone>
                  <StatusBar>
                    <Clock>9:41</Clock>
                    <SignalIcon />
                    <WifiIcon />
                    <BatteryIcon />
                  </StatusBar>
                  <Notice>
                    <NoticeHead>
                      <AppIcon />
                      <Small $c={MUTED}>App 이름이 들어가는 자리입니다.</Small>
                      <NoticeAction>펼치기</NoticeAction>
                    </NoticeHead>
                    <NoticeBody>
                      <div>
                        <b>캠페인 제목이 들어가는 자리입니다.</b>
                        <br />
                        캠페인 제목이 들어가는 자리입니다.
                      </div>
                      <Thumb />
                    </NoticeBody>
                  </Notice>
                  <PhoneNote>기기에 따라 보이는 내용 표시에 차이가 있을수 있습니다.</PhoneNote>
                </Phone>

                <Form>
                  <Label>
                    메시지 타입<Star>*</Star>
                  </Label>
                  <Segments $w={382} $h={60} $bg="#f6f6f6" $mt={8}>
                    <Segment $w={110} $h={40} $ml={17}>
                      메시지없음
                    </Segment>
                    <Segment $w={92} $h={40} $ml={6} $on>
                      텍스트
                    </Segment>
                    <Segment $w={120} $h={40} $ml={12}>
                      텍스트+이미지
                    </Segment>
                  </Segments>
                  <ToggleRow>
                    <Row $gap={8}>
                      <Label>A/B 테스트 설정</Label>
                      <GlyphDot size={18} bg="#9dabb9" fg="#fff" glyph="i" />
                    </Row>
                    <Toggle />
                  </ToggleRow>
                  <Label $mt={32}>메시지 제목</Label>
                  <Field>
                    제목을 입력해주세요.
                    <PlusDot />
                  </Field>
                  <Label $mt={32}>메시지 내용</Label>
                  <Field $h={102}>
                    제목을 입력해주세요.
                    <PlusDot />
                  </Field>
                  <Row $mt={32} $gap={12}>
                    <Label>딥링크 URL</Label>
                    <GlyphDot size={18} bg="#9dabb9" fg="#fff" glyph="i" />
                  </Row>
                  <Row $mt={12} $gap={5}>
                    <AndroidIcon />
                    로플랫 테스트 안드로이드
                  </Row>
                  <Field />
                </Form>
              </Composer>

              <Label $mt={32}>
                메시지 발송 간격 설정 <Star>*</Star>
              </Label>
              <IntervalRow>
                <RadioLabel $w={175} $gap={12}>
                  <RadioDot $on />
                  기간내 1회
                </RadioLabel>
                <RadioLabel $w={151}>
                  <RadioDot />
                  1일 1회
                </RadioLabel>
                <RadioLabel $w={92} $gap={8}>
                  <RadioDot />
                  발송 후
                </RadioLabel>
                <TimeBox $w={246} $pl={23}>
                  <Time value="09" unit="일" />
                  <Time value="09" unit="시" />
                  <Time value="00" unit="분" />
                </TimeBox>
                &nbsp;&nbsp;경과 후 재 발송
              </IntervalRow>
            </Body>
          </Section>

          <Section step={4} title="캠페인 실행 및 시간 설정" height={572}>
            <Body>
              <Label $indent={2}>캠페인 실행 조건</Label>
              <Row $mt={17}>
                <Label $indent={2} $w={400}>
                  <RadioLabel $w={385} $gap={8}>
                    <RadioDot $on />
                    설정한 ‘매장 신호 범위’에서 캠페인 실행
                    <GlyphDot size={14} bg="#9dabb9" fg="#fff" glyph="?" />
                  </RadioLabel>
                  <RadioLabel $w={240}>
                    <RadioDot />
                    설정한 ‘매장’에서 캠페인 실행
                  </RadioLabel>
                </Label>
              </Row>
              <Label $mt={31}>
                기간 선택 <Star>*</Star>
                <Small $c={BLUE} $w={700} $ml={9}>
                  캠페인 기간 총 10일
                </Small>
              </Label>
              <Row $mt={16}>
                <DateBox>
                  <CalendarIcon />
                  <Dash $w={40} />
                  <DateText>2021-10-14</DateText>
                  <Dash $w={94}>-</Dash>
                  <DateText>2021-10-14</DateText>
                </DateBox>
                <Hint $ml={17}>
                  캠페인 집행 시간은 국내를 기준으로 합니다.
                  <br />
                  하루 동안만 캠페인을 진행할 경우 해당 일을 더블 클릭해주세요.
                </Hint>
              </Row>
              <Label $mt={32}>
                캠페인 실행 시간대 <Star>*</Star>
                <Small $c={RED} $w={700} $ml={9}>
                  광고성 메시지는 20시 50분~익일 8시까지 발송할 수 없습니다.
                </Small>
              </Label>
              <TimeHead>
                <Small>시작 시간</Small>
                <Small>종료 시간</Small>
              </TimeHead>
              <ScheduleRow kind="add" mt={4} states={["on", "off", "off", "off", "off", "off", "off"]} />
              <ScheduleRow kind="remove" mt={16} states={["disabled", "on", "on", "on", "on", "on", "on"]} />
            </Body>
          </Section>
        </Content>

        <Footer>
          <FootButton $w={195} $left>
            임시저장 캠페인<DraftCount>0</DraftCount>
          </FootButton>
          <FootButton $w={102}>취소</FootButton>
          <FootButton $w={131}>임시저장</FootButton>
          <FootButton $w={150} $primary>
            캠페인 생성
          </FootButton>
        </Footer>
      </Main>
    </Page>
  );
}
